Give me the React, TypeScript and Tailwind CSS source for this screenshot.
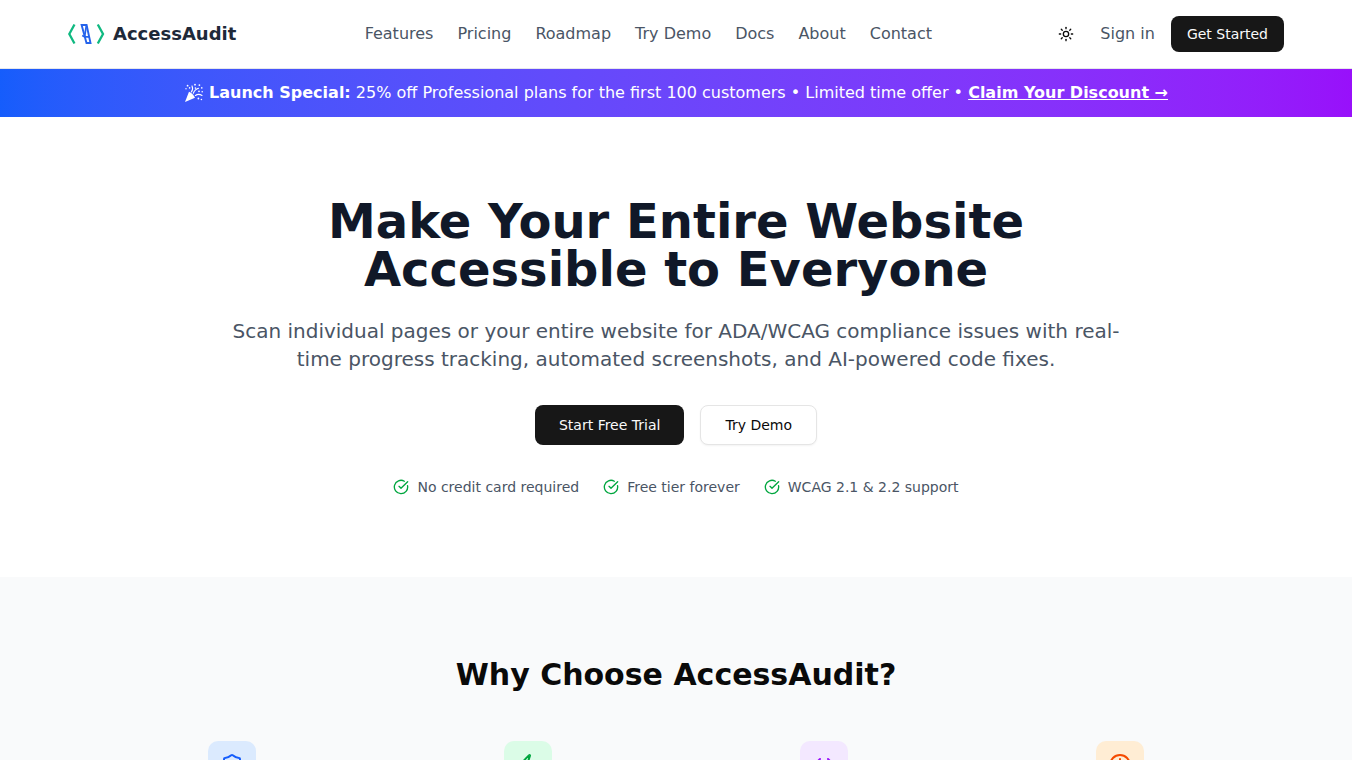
import React, { useState } from 'react';
import { CircleCheckBig, Clock, Code, Shield, Sun, Zap } from 'lucide-react';

const NAV_LINKS = ['Features', 'Pricing', 'Roadmap', 'Try Demo', 'Docs', 'About', 'Contact'];

const PERKS = ['No credit card required', 'Free tier forever', 'WCAG 2.1 & 2.2 support'];

// TODO: add titles and descriptions to the cards
const FEATURES = [
	{ id: 'compliance', icon: Shield, tile: 'bg-blue-100', color: 'text-blue-600' },
	{ id: 'speed', icon: Zap, tile: 'bg-green-100', color: 'text-green-600' },
	{ id: 'code', icon: Code, tile: 'bg-purple-100', color: 'text-purple-600' },
	{ id: 'time', icon: Clock, tile: 'bg-orange-100', color: 'text-orange-600' },
];

const Logo = () => (
	<svg width="37" height="24" viewBox="0 0 37 24" fill="none" aria-hidden="true">
		<path d="M6.5 2.5 1.3 12l5.2 9.5M29.8 2.5 35 12l-5.2 9.5" stroke="#10b981" strokeWidth="2.3" />
		<path d="M13.6 3h5l3.9 18h-4z" stroke="#2563eb" strokeWidth="1.9" />
		<path d="M18.3 4l-1.6 10M14.2 13.6l2.5 1.2h4.6" stroke="#2563eb" strokeWidth="1.7" />
	</svg>
);

const PartyIcon = () => (
	<svg width="20" height="20" viewBox="0 1.5 20 20" fill="currentColor" className="inline-block overflow-visible align-middle" role="img" aria-label="Party popper">
		<path d="M1 19.5 5 9.3c2.6 1.2 5 3.6 6 6z" />
		<path d="M7.4 9.4c1.4-2 1.6-4 .6-6M9.3 10.8c1-2.8 3-4.4 5.2-5M11.4 13c2-1.4 4.4-1.4 6.6 0" fill="none" stroke="currentColor" strokeWidth="1.1" strokeLinecap="round" />
		<circle cx="3.6" cy="3.2" r=".9" />
		<circle cx="2" cy="6.2" r=".7" />
		<circle cx="5.6" cy="5.4" r=".8" />
		<circle cx="11" cy="2.2" r=".9" />
		<circle cx="11.4" cy="5.6" r=".8" />
		<circle cx="15.4" cy="2.6" r=".9" />
		<circle cx="17.8" cy="5.4" r=".8" />
		<circle cx="15" cy="8.8" r=".9" />
		<circle cx="18.2" cy="9.2" r=".8" />
		<circle cx="14.4" cy="16" r=".9" />
		<circle cx="17.4" cy="17" r=".8" />
	</svg>
);

const Header = () => {
	const [theme, setTheme] = useState('light');

	return (
		<header className="border-b border-gray-200 bg-white">
			<div className="mx-auto flex max-w-7xl items-center justify-between px-8 py-4">
				<a href="#home" className="flex items-center gap-2 text-lg font-bold text-gray-800">
					<Logo />
					AccessAudit
				</a>
				<nav className="flex items-center gap-6">
					{NAV_LINKS.map((link) => (
						<a key={link} href="#nav" className="text-gray-600 hover:text-gray-900">{link}</a>
					))}
				</nav>
				<div className="-ml-3 flex items-center gap-4">
					<button
						type="button"
						aria-label="Toggle theme"
						className="flex size-9 items-center justify-center rounded-md hover:bg-gray-100"
						onClick={() => setTheme(theme === 'light' ? 'dark' : 'light')}
					>
						<Sun className="size-4" />
					</button>
					<a href="#signin" className="text-gray-600 hover:text-gray-900">Sign in</a>
					<button type="button" className="h-9 rounded-lg bg-neutral-900 px-4 text-sm text-neutral-50 hover:bg-neutral-800">
						Get Started
					</button>
				</div>
			</div>
		</header>
	);
};

const LaunchBanner = () => (
	<div className="bg-linear-to-r from-blue-600 to-purple-600 px-4 py-3 text-center text-white">
		<p>
			<PartyIcon /> <strong>Launch Special:</strong> 25% off Professional plans for the first 100 customers • Limited time offer •{' '}
			<a href="#discount" className="font-bold underline">Claim Your Discount →</a>
		</p>
	</div>
);

const Hero = () => (
	<section className="px-8 py-20">
		<div className="mx-auto max-w-4xl text-center">
			<h1 className="mb-6 text-5xl leading-none font-bold text-gray-900">Make Your Entire Website Accessible to Everyone</h1>
			<p className="mb-8 text-xl text-gray-600">
				Scan individual pages or your entire website for ADA/WCAG compliance issues with real-time progress
				tracking, automated screenshots, and AI-powered code fixes.
			</p>
			<div className="flex justify-center gap-4">
				<button type="button" className="h-10 rounded-lg bg-neutral-900 px-6 text-sm text-neutral-50 hover:bg-neutral-800">
					Start Free Trial
				</button>
				<button type="button" className="h-10 rounded-lg border border-neutral-200 bg-white px-6 text-sm text-neutral-950 shadow-xs hover:bg-neutral-100">
					Try Demo
				</button>
			</div>
			<ul className="mt-8 flex justify-center gap-6 text-sm text-gray-600">
				{PERKS.map((perk) => (
					<li key={perk} className="flex items-center gap-2">
						<CircleCheckBig className="size-4 text-green-600" />
						{perk}
					</li>
				))}
			</ul>
		</div>
	</section>
);

const Features = () => (
	<section className="bg-gray-50 px-8 py-20">
		<div className="mx-auto max-w-6xl">
			<h2 className="mb-12 text-center text-3xl font-bold">Why Choose AccessAudit?</h2>
			<div className="grid grid-cols-4 gap-8">
				{FEATURES.map(({ id, icon: Icon, tile, color }) => (
					<div key={id} className={`mx-auto flex size-12 items-center justify-center rounded-[10px] ${tile}`}>
						<Icon className={`size-6 ${color}`} />
					</div>
				))}
			</div>
		</div>
	</section>
);

const App = () => (
	<div className="min-h-screen bg-white font-['DejaVu_Sans',sans-serif] text-neutral-950">
		<Header />
		<LaunchBanner />
		<main>
			<Hero />
			<Features />
		</main>
	</div>
);

export default App;
